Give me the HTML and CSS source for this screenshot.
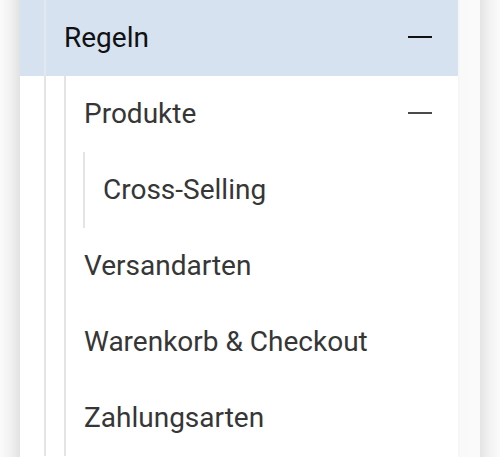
FILE: index.html
```html
<!DOCTYPE html>
<html lang="de">
<head>
    <meta charset="UTF-8">
    <title>Regeln</title>
    <link rel="stylesheet" href="styles.css">
</head>
<body>
    <div class="shade-left"></div>
    <nav class="menu">
        <ul class="tree">
            <li>
                <div class="row row-active">
                    <span>Regeln</span>
                    <span class="toggle"></span>
                </div>
                <ul class="tree tree-sub">
                    <li>
                        <div class="row">
                            <span>Produkte</span>
                            <span class="toggle toggle-muted"></span>
                        </div>
                        <ul class="tree tree-leaf">
                            <li><div class="row">Cross-Selling</div></li>
                        </ul>
                    </li>
                    <li><div class="row">Versandarten</div></li>
                    <li><div class="row">Warenkorb &amp; Checkout</div></li>
                    <li><div class="row">Zahlungsarten</div></li>
                </ul>
            </li>
        </ul>
    </nav>
    <div class="gutter"></div>
    <div class="shade-right"></div>
</body>
</html>
```

FILE: styles.css
```css
body {
    margin: 0;
    height: 457px;
    display: flex;
    overflow: hidden;
    font-family: Roboto, "Liberation Sans", Arial, sans-serif;
    background-color: #fafafa;
}
.shade-left {
    width: 20px;
    background: linear-gradient(to right, #fafafa, #f2f2f2 50%, #e2e2e2);
}
.menu {
    width: 438px;
    background-color: white;
}
.gutter {
    width: 22px;
    background: linear-gradient(to right, #f5f5f5, #f9f9f9 2px, #fafafa);
}
.shade-right {
    width: 20px;
    background: linear-gradient(to right, #e4e4e4, #f3f3f3 50%, #fafafa);
}
.tree {
    list-style: none;
    margin: 0 0 0 24px;
    padding: 0;
    border-left: 2px solid #e4e4e4;
}
.tree-sub {
    margin-left: 18px;
}
.tree-leaf {
    margin-left: 17px;
}
.row {
    height: 76px;
    display: flex;
    align-items: center;
    justify-content: space-between;
    padding: 0 26px 2px 18px;
    font-size: 28px;
    color: #363636;
    box-sizing: border-box;
}
.row-active {
    margin-left: -26px;
    padding-left: 44px;
    color: #111;
    background: linear-gradient(to right, #d6e2f0 24px, #e2e8f0 24px 26px, #d6e2f0 26px);
}
.toggle {
    width: 24px;
    height: 2px;
    background-color: #111;
}
.toggle-muted {
    background-color: #4a4a4a;
}
```
